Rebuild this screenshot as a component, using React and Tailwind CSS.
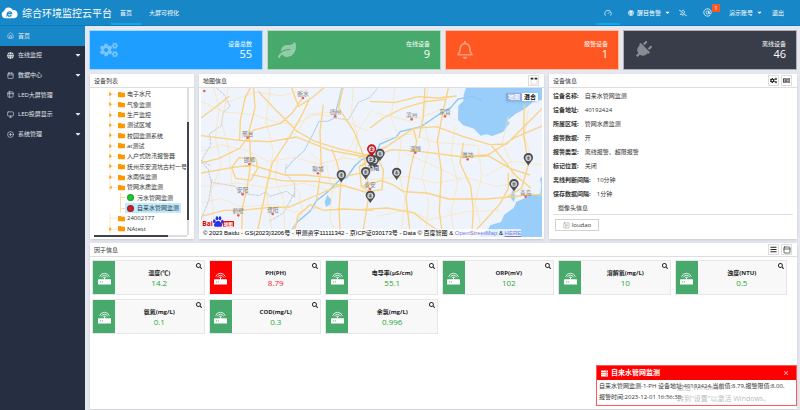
import React from 'react';
import {
    FaCogs, FaLeaf, FaRegBell, FaPlug, FaSearch, FaCaretDown, FaGlobe, FaRegBellSlash,
    FaFolder, FaBars, FaTimes, FaServer, FaRegNewspaper,
} from 'react-icons/fa';
import { House, Calendar, Table2, Monitor, CirclePlus, Gauge, AtSign, SquarePlay, PanelTop } from 'lucide-react';

const menus = [
    { name: '首页', icon: House, active: true },
    { name: '在线监控', icon: FaGlobe, sub: true },
    { name: '数据中心', icon: Calendar, sub: true },
    { name: 'LED大屏管理', icon: Table2 },
    { name: 'LED投屏显示', icon: Monitor, sub: true },
    { name: '系统管理', icon: CirclePlus, sub: true },
];

const stats = [
    { name: '设备总数', value: 55, icon: FaCogs, bg: 'bg-[#1e9fff]' },
    { name: '在线设备', value: 9, icon: FaLeaf, bg: 'bg-[#48a96c]' },
    { name: '报警设备', value: 1, icon: FaRegBell, bg: 'bg-[#ff5722]' },
    { name: '离线设备', value: 46, icon: FaPlug, bg: 'bg-[#393d49]', turn: 'rotate-45' },
];

const tree = [
    { name: '电子水尺' },
    { name: '气象监测' },
    { name: '生产监控' },
    { name: '测试区域' },
    { name: '校园监测系统' },
    { name: 'at测试' },
    { name: '入户式防汛报警器' },
    { name: '抚州乐安流坑古村一号' },
    { name: '水雨情监测' },
    { name: '管网水质监测', open: true },
    { name: '污水管网监测', leaf: true, dot: 'bg-[#22c52e]' },
    { name: '自来水管网监测', leaf: true, dot: 'bg-[#c8202c]', selected: true },
    { name: '24002177', noArrow: true },
    { name: 'NAtest' },
];

const info = [
    ['设备名称:', '自来水管网监测'],
    ['设备地址:', '40192424'],
    ['所属区域:', '管网水质监测'],
    ['报警数据:', '开'],
    ['报警类型:', '离线报警、超限报警'],
    ['标记位置:', '关闭'],
    ['离线判断间隔:', '10分钟'],
    ['保存数据间隔:', '1分钟'],
];

const factors = [
    { name: '温度(℃)', value: '14.2' },
    { name: 'PH(PH)', value: '8.79', alarm: true },
    { name: '电导率(μS/cm)', value: '55.1' },
    { name: 'ORP(mV)', value: '102' },
    { name: '溶解氧(mg/L)', value: '10' },
    { name: '浊度(NTU)', value: '0.5' },
    { name: '氨氮(mg/L)', value: '0.1' },
    { name: 'COD(mg/L)', value: '0.3' },
    { name: '余氯(mg/L)', value: '0.996' },
];

const cities = [
    ['衡水', 324, 75], ['德州', 421, 130], ['邢台', 158, 194], ['邯郸', 163, 273], ['聊城', 369, 301],
    ['安阳', 143, 364], ['鹤壁', 130, 427], ['濮阳', 233, 423], ['泰安', 525, 348], ['滨州', 650, 139],
    ['东营', 750, 130], ['淄博', 661, 239], ['潍坊', 818, 259], ['青岛', 992, 371],
];

const pins = [
    [439, 329], [512, 320], [538, 285], [555, 265], [526, 391], [605, 322], [1000, 278], [957, 356], [527, 282],
];

const Header = () => (
    <header className="flex h-[26px] items-stretch border-b border-[#0b7abf] bg-[#1787c8] text-white">
        <div className="flex w-[111px] items-center gap-1 whitespace-nowrap">
            <svg viewBox="0 0 54 36" className="ml-px h-3 w-[17px] shrink-0">
                <path d="M13 35a12 12 0 0 1-3-23A15 15 0 0 1 38 9a13 13 0 0 1 3 26z" fill="#fff" />
                <path d="M33 25a7 7 0 1 1 1-5H21" fill="none" stroke="#1787c8" strokeWidth="4" />
                <path d="M19 29c-3 2-3-4 4-10" fill="none" stroke="#1787c8" strokeWidth="2" />
            </svg>
            <h1 className="text-[10px] leading-3">综合环境监控云平台</h1>
        </div>
        <nav className="flex items-stretch">
            <a href="#home" className="flex w-[30px] items-center justify-center border-b-2 border-[#12a5ea] pt-[2px]">首页</a>
            <a href="#screen" className="flex items-center px-2">大屏可视化</a>
        </nav>
        <div className="ml-auto flex items-stretch pr-4">
            <button aria-label="仪表盘" className="flex w-6 items-center justify-center border-b-2 border-[#12a5ea] pt-[2px]"><Gauge size={8} /></button>
            <button className="ml-2 flex items-center gap-[3px]">
                <FaGlobe size={6} />醒目告警<FaCaretDown size={7} />
            </button>
            <button aria-label="静音" className="ml-2 flex items-center"><FaRegBellSlash size={8} /></button>
            <button aria-label="消息" className="relative ml-4 flex items-center">
                <AtSign size={9} />
                <span className="absolute top-1 left-[9px] h-2 w-2 bg-[#ff5722] text-center leading-2">1</span>
            </button>
            <button className="ml-[17px] flex items-center gap-[3px]">演示账号<FaCaretDown size={7} /></button>
            <a href="#logout" className="ml-[9px] flex items-center">退出</a>
        </div>
    </header>
);

const Sidebar = () => (
    <aside className="w-[85px] shrink-0 bg-[#262f42] text-[#e3e6eb]">
        <ul className="grid h-[118px] auto-rows-fr">
            {menus.map(({ name, icon: Icon, active, sub }) => (
                <li key={name} className={active ? 'bg-[#1787c8]' : ''}>
                    <a href="#menu" className="flex h-full items-center pr-[3px] pl-[7px]">
                        <Icon size={7} />
                        <span className="ml-1">{name}</span>
                        {sub && <FaCaretDown size={8} className="ml-auto" />}
                    </a>
                </li>
            ))}
        </ul>
    </aside>
);

const IconButton = ({ label, children }) => (
    <button aria-label={label} className="flex h-[11px] w-[11px] items-center justify-center border border-[#ddd] bg-white text-[#222]">
        {children}
    </button>
);

const Panel = ({ title, tools, className = '', children }) => (
    <section className={`flex min-w-0 flex-col bg-white shadow-sm ${className}`}>
        <div className="flex h-[14px] shrink-0 items-center justify-between border-b border-[#dedede] pr-[5px] pl-1">
            <h2>{title}</h2>
            <div className="flex gap-[2px]">{tools}</div>
        </div>
        {children}
    </section>
);

const DeviceTree = () => (
    <div className="flex grow pl-1">
        <div className="flex min-w-0 grow flex-col">
            <ul className="mt-px grid h-[145px] auto-rows-fr overflow-hidden whitespace-nowrap">
                {tree.map((node) => node.leaf ? (
                    <li key={node.name} className="ml-[26px] flex items-center border-l border-[#ffdca8]">
                        <span className="w-1 border-t border-[#ffdca8]" />
                        <a href="#device" className={`flex h-full items-center gap-[3px] px-[2px] ${node.selected ? 'bg-[#beebff]' : ''}`}>
                            <span className={`h-[7px] w-[7px] rounded-full border border-black/20 ${node.dot}`} />
                            {node.name}
                        </a>
                    </li>
                ) : (
                    <li key={node.name} className="ml-[15px] flex items-center">
                        <svg viewBox="0 0 24 30" className="h-full w-2 shrink-0" preserveAspectRatio="none">
                            <path d="M3 0v30M3 15h18" stroke="#ffdca8" strokeWidth="2" />
                            {!node.noArrow && <path d={node.open ? 'M0 19h8v-9z' : 'M1 9v12l7-6z'} fill="#ff9800" />}
                        </svg>
                        <FaFolder size={7} className="mr-[2px] ml-px shrink-0 text-[#ff9800]" />
                        {node.name}
                    </li>
                ))}
            </ul>
            <div className="mt-auto mb-[2px] h-[2px] bg-[#ddd]"><div className="h-full w-4/5 bg-[#41434c]" /></div>
        </div>
        <div className="mr-[5px] mb-1 flex w-[2px] flex-col bg-[#ddd]">
            <div className="mt-[34px] h-[98px] bg-[#41434c]" />
        </div>
    </div>
);

const Pin = ({ x, y, color = '#4a4d51' }) => (
    <g transform={`translate(${x} ${y})`}>
        <path d="M0 0C-3-9-14-15-14-24a14 14 0 0 1 28 0C14-15 3-9 0 0z" fill={color} />
        <circle cy="-23" r="9" fill="#d7d9db" />
        <path d="M-5-25h10M-5-20h10M0-29v12" stroke={color} strokeWidth="2" />
    </g>
);

const AreaMap = () => (
    <div className="relative mx-[2px] mb-[2px] h-[149px] overflow-hidden">
        <svg viewBox="18 45 1023 447" preserveAspectRatio="xMidYMid slice" className="h-full w-full bg-[#eff3fb]">
            {/* sea and lakes */}
            <g fill="#99cefa">
                <path d="M813 45l-7 20-1 18-15 15-1 42 15 16 33 11 20 21 17-4 18 5 32-12 20-27-6-8 24-20 28-15 24-21 27-6V45z" />
                <path d="M1041 310l-6 8 4 18-3 26-32 4-16 10-24 10-8 19-28 20-10 22-32 10-10 18-18 10-6 7h189z" />
                <path d="M952 352l10 18-6 17-10-14zM397 366l12 14-2 14-14 8-4-16z" />
            </g>
            <path d="M276 492l32-46 38-32 18-30 30-24 39-38 22-8 24-35 22-20 43-15 10-30 50-22 12-16 62-15 25-17 38-26 26-14 22-26 42-8 30 12" fill="none" stroke="#8cc6f5" strokeWidth="4" />
            <path d="M440 45l-22 90-20 10h-26l-18 38-26 50-34 30-20 24" fill="none" stroke="#a9d0f2" strokeWidth="3" />
            {/* province borders */}
            <g fill="none" stroke="#b4b8c3" strokeWidth="2" strokeDasharray="10 2">
                <path d="M65 45l22 20 18 35-20 18-6 40-36 25 5 32-30 50 22 25 8 38 74 12 10 20 60 8 20-12 12 14 50-15 25 18V330l-29-30 4-26" />
                <path d="M299 360l-34 60-42 25M18 440l24-60 9-62M445 45l-30 90 45 5 30-52 34-14 24-28M18 262l28 16" />
            </g>
            {/* county roads */}
            <g fill="none" stroke="#fbe2ae" strokeWidth="2">
                <path d="M18 85l70 32 90 8 60 20 60 10 62-30 60 5 100 45M18 235l60-20 78 18 64 32 80-12 70 20 80-18 70 12M55 45l18 60-12 90 18 80-30 80 12 137M225 45l-12 100 22 90-22 110 20 147M250 250l-10 70 26 60 4 112M18 340l110-10 90 15 110-14 84 24M18 390l60-14 60 26 100-8 60 24 80-14M300 185l40-60 90-10M272 300l40 60 10 60-42 72M345 240l50 40 16 70-6 90 24 52M475 45l-6 80 20 66-8 60M530 110l-38 60-30 60-50 54M90 90l90-32 80 10 80-20M100 45l-20 100 22 90 10 120" />
                <path d="M525 320l110-10 90 20 90-16 90 26 60-10M545 430l90-20 70 30 110-24 100-4M600 45l-12 90 30 70-10 80 22 90-12 110M700 45l-15 90 18 80-22 100 20 70-10 107M780 160l-12 90 20 80-20 90 10 72M850 220l10 90-20 80 16 60M940 130l-18 80 28 60 2 70M545 120l100 24 90-32 50 30M560 200l90-18 70 26 130 10M630 240l90 40 80 40M870 310l80-45 90 10M1000 110l-12 80 24 70" />
            </g>
            {/* motorways */}
            <g fill="none" stroke="#fbd282" strokeWidth="4">
                <path d="M176 45l4 60-18 70 6 90-12 80-14 60-2 87M290 45l20 55 40-25 36-30M345 75l-27 56-36 64-50 75-20 85-28 137M18 188l116 14 90 4 80-14 100 40 110 20M134 202l2-60 14-66 16-31M18 270l54-14 62-30 42-55 80-20 35-30 33-48M190 55l56 60 60 60 54 30 70 22 90 20M18 300l92-16 60-8 100 30 60 0 90 10 100-20M110 284l22-30 50 2 6 30-20 36-46-6zM170 305l90 18 100 2 90 14 74 22M18 430l70-18 50 0 80-8 64-2 70-30 80-34M295 492l14-65 36-32M345 395l40 17 60-4 90 4M443 45l-12 60 46 70 20 50 12 35 14 100-22 132M410 228l16 40 12 55-6 85 4 84M385 95l-10 80 4 110-15 100M18 135l40-30 45-35" />
                <path d="M490 255l35-14 50-20 80-55 70-5 80 30 80 24 50-2 60-60 60-60M500 280l40-30 50-20 84 5 130 17 70-3 85-55 82-35M525 85l75 4 70-18 60 4 55-6M655 165l10 40-20 90-12 80 14 117M525 165l40-30 60-30 70-20 60-6M760 45l-18 80-15 80 12 90-6 120 10 77M805 210l-10 60 32 70 8 70-5 82M690 45l-6 90-12 60M500 340l60-18 35 14 30 20 70 4 66 18 110 0 80-6 60-8 70 6M495 410l80-5 80 14 40 30 60 43M493 280l6 60 22 15 40-5 4-60-20-40zM890 219l40 47 30 40 48 40M805 250l70-4 70 40 60 20M940 300l0 46-24 45-45 50-40 44M988 95l-2 90 14 90-20 70-50 30" />
            </g>
            {cities.map(([name, x, y]) => (
                <g key={name}>
                    <circle cx={x} cy={y} r="4" fill="#e2635f" />
                    <text x={x} y={y - 6} textAnchor="middle" fontSize="17" fill="#808080">{name}</text>
                </g>
            ))}
            <circle cx="28" cy="54" r="4" fill="#e2635f" />
            <text x="535" y="290" textAnchor="middle" fontSize="18" fill="#222">济南</text>
            {pins.map(([x, y]) => <Pin key={x} x={x} y={y} />)}
            <Pin x={530} y={252} color="#d0101c" />
            <g>
                <text x="22" y="459" fontSize="20" fontWeight="700" fill="#e10602">Bai</text>
                <g fill="#2932e1">
                    <ellipse cx="58" cy="445" rx="4" ry="6" />
                    <ellipse cx="66" cy="436" rx="4" ry="6" />
                    <ellipse cx="75" cy="436" rx="4" ry="6" />
                    <ellipse cx="82" cy="446" rx="4" ry="6" />
                    <path d="M69 443c6 0 14 10 13 14-2 6-8 4-13 4s-11 2-12-4c0-5 7-14 12-14z" />
                </g>
                <rect x="84" y="444" width="33" height="17" rx="2" fill="#e10602" />
                <text x="100" y="458" textAnchor="middle" fontSize="14" fontWeight="700" fill="#fff">地图</text>
            </g>
        </svg>
        <div className="absolute top-[5px] right-1 flex font-bold shadow">
            <button className="h-2 w-4 bg-[#8ea8e0] leading-2 text-white">地图</button>
            <button className="h-2 w-4 bg-white leading-2 text-black">混合</button>
        </div>
        <p className="absolute bottom-0 left-0 bg-white/70 pl-[2px] font-['Liberation_Sans','Noto_Sans_CJK_SC',sans-serif] leading-2 whitespace-nowrap text-black">
            © 2023 Baidu - GS(2023)3206号 - 甲测资字11111342 - 京ICP证030173号 - Data © 百度智图 &amp;{' '}
            <a href="#osm" className="text-[#7777dd]">OpenStreetMap</a> &amp; <a href="#here" className="text-[#7777dd] underline">HERE</a>
        </p>
    </div>
);

const DeviceInfo = () => (
    <div className="px-1 pt-px">
        <dl>
            {info.map(([label, value]) => (
                <div key={label} className="flex h-[14px] items-center gap-[6px]">
                    <dt className="font-bold">{label}</dt>
                    <dd>{value}</dd>
                </div>
            ))}
        </dl>
        <h3 className="flex h-[14px] items-center border-b border-[#e2e2e2] pl-[5px]">摄像头信息</h3>
        <button className="mt-1 ml-[2px] flex h-3 w-11 items-center justify-center gap-[2px] border border-[#d2d2d2]">
            <SquarePlay size={7} strokeWidth={1} />loudao
        </button>
    </div>
);

const RouterIcon = () => (
    <svg viewBox="0 0 40 42" className="h-[14px] w-[13px]">
        <g fill="none" stroke="#fff" strokeWidth="2.5">
            <path d="M5 17a16 16 0 0 1 30 0M10 19a11 11 0 0 1 20 0M15 21a6 6 0 0 1 10 0" />
            <path d="M20 19v9" />
        </g>
        <rect y="25" width="40" height="16" rx="1" fill="#fff" />
        <path d="M6 33h3M12 33h3" stroke="#48a96c" strokeWidth="3" />
    </svg>
);

const FactorCard = ({ name, value, alarm }) => (
    <div className="flex h-[35px] border border-[#e6e6e6] bg-[#f8f8f8]">
        <div className={`flex w-[22px] shrink-0 items-center justify-center ${alarm ? 'bg-[#ff0000]' : 'bg-[#48a96c]'}`}>
            <RouterIcon />
        </div>
        <div className="relative flex grow flex-col items-center pt-2">
            <h3 className="font-bold text-[#222]">{name}</h3>
            <p className={`mt-px text-[8px] leading-[10px] ${alarm ? 'text-[#f01c28]' : 'text-[#1fa838]'}`}>{value}</p>
            <button aria-label="查看" className="absolute top-[2px] right-[2px] text-[#222]"><FaSearch size={6} /></button>
        </div>
    </div>
);

const Toast = () => (
    <div role="alert" className="fixed right-[3px] bottom-1 w-[201px] border border-[#ff5a5a] bg-white">
        <div className="flex h-[14px] items-center gap-[3px] bg-[#ff0000] px-1 text-white">
            <FaServer size={7} />
            <h2 className="text-[7px] font-semibold">自来水管网监测</h2>
            <button aria-label="关闭" className="mr-[3px] ml-auto text-[#ff8888]"><FaTimes size={6} /></button>
        </div>
        <p className="px-[2px] pt-px pb-[2px] leading-[11px] whitespace-nowrap">
            自来水管网监测-1-PH 设备地址:40192424,当前值:8.79,报警限值:8.00,<br />报警时间:2023-12-01 16:56:38
        </p>
        <div className="pointer-events-none absolute top-4 left-20 whitespace-nowrap text-[7px] text-[#999]/70">
            <p className="leading-3">激活 Windows</p>
            <p className="leading-[10px]">转到"设置"以激活 Windows。</p>
        </div>
    </div>
);

const App = () => (
    <div className="flex min-h-screen flex-col bg-[#e6e8ef] font-['Open_Sans','Noto_Sans_CJK_SC',sans-serif] text-[6px] leading-2 text-[#333]">
        <Header />
        <div className="flex grow">
            <Sidebar />
            <main className="flex min-w-0 grow flex-col pt-1 pr-[3px] pb-px pl-1">
                <div className="grid grid-cols-4 gap-1">
                    {stats.map(({ name, value, icon: Icon, bg, turn = '' }) => (
                        <div key={name} className={`flex h-10 items-center justify-between border border-white/60 px-[10px] text-white ${bg}`}>
                            <Icon size={18} className={`opacity-40 ${turn}`} />
                            <div className="text-right">
                                <p>{name}</p>
                                <p className="text-[11px] leading-3">{value}</p>
                            </div>
                        </div>
                    ))}
                </div>
                <div className="mt-1 ml-px grid grid-cols-[104fr_345fr_248fr] gap-[5px]">
                    <Panel title="设备列表"><DeviceTree /></Panel>
                    <Panel
                        title="地图信息"
                        tools={(
                            <IconButton label="全屏">
                                <svg viewBox="0 0 24 24" className="h-2 w-2">
                                    <path d="M2 5h8M14 5h8" stroke="#222" strokeWidth="5" />
                                    <path d="M3 10v11h18V10" fill="none" stroke="#bbb" strokeWidth="2" strokeDasharray="4 2" />
                                </svg>
                            </IconButton>
                        )}
                    >
                        <AreaMap />
                    </Panel>
                    <Panel
                        title="设备信息"
                        tools={<><IconButton label="设置"><FaCogs size={7} /></IconButton><IconButton label="详情"><FaRegNewspaper size={7} /></IconButton></>}
                    >
                        <DeviceInfo />
                    </Panel>
                </div>
                <Panel
                    title="因子信息"
                    className="mt-1 ml-px grow"
                    tools={<><IconButton label="列表"><FaBars size={7} /></IconButton><IconButton label="面板"><PanelTop size={8} /></IconButton></>}
                >
                    <div className="grid grid-cols-6 gap-x-1 gap-y-1 pt-[3px] pr-[10px] pl-[2px]">
                        {factors.map((item) => <FactorCard key={item.name} {...item} />)}
                    </div>
                </Panel>
            </main>
        </div>
        <Toast />
    </div>
);

export default App;
